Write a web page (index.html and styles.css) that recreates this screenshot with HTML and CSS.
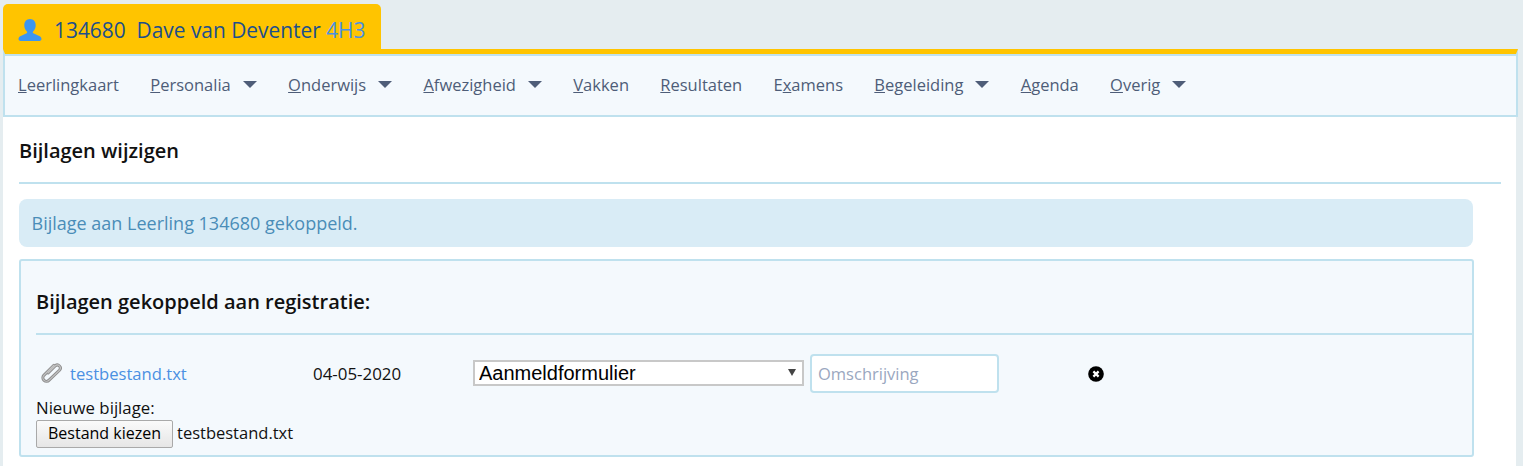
FILE: index.html
```html
<!DOCTYPE html>
<html lang="nl">
<head>
<meta charset="utf-8">
<title>Bijlagen wijzigen</title>
<link rel="stylesheet" href="styles.css">
</head>
<body>
<div class="version">Versie 7.0.1 - 2020-04-22</div>
<div class="page">
  <header class="tab">
    <svg class="user" viewBox="0 0 24 24" width="24" height="24"><path d="M12 1c3.600 0 5.700 2.800 5.700 6.300 0 2.600-1 4.900-2.600 6.200-.5.500-.4 1.400.3 1.800l5.800 2.700c1.500.7 2.300 1.800 2.300 3.100 0 1-.8 1.900-2 1.900H2.500c-1.200 0-2-.9-2-1.900 0-1.300.8-2.400 2.300-3.100l5.800-2.700c.7-.4.800-1.300.3-1.800-1.600-1.300-2.600-3.600-2.600-6.200C6.300 3.800 8.400 1 12 1z"/></svg>
    <span class="tab-text">134680&nbsp; Dave van Deventer <span class="klas">4H3</span></span>
  </header>
  <nav class="nav">
    <a class="nav-item"><u>L</u>eerlingkaart</a>
    <a class="nav-item caret"><u>P</u>ersonalia</a>
    <a class="nav-item caret"><u>O</u>nderwijs</a>
    <a class="nav-item caret"><u>A</u>fwezigheid</a>
    <a class="nav-item"><u>V</u>akken</a>
    <a class="nav-item"><u>R</u>esultaten</a>
    <a class="nav-item">E<u>x</u>amens</a>
    <a class="nav-item caret"><u>B</u>egeleiding</a>
    <a class="nav-item"><u>A</u>genda</a>
    <a class="nav-item caret"><u>O</u>verig</a>
  </nav>
  <main class="content">
    <h1 class="title">Bijlagen wijzigen</h1>
    <div class="alert">Bijlage aan Leerling 134680 gekoppeld.</div>
    <section class="card">
      <h2 class="card-title">Bijlagen gekoppeld aan registratie:</h2>
      <div class="row">
        <div class="file-cell">
          <svg class="clip" viewBox="0 0 24 24" width="23" height="23" fill="none"><path class="clip-outer" d="M8.500 13.500 16 6a3.200 3.200 0 0 1 4.500 4.500L9.500 21a3.600 3.600 0 0 1-5.500-5L14.500 5.500"/><path class="clip-inner" d="M8.500 13.500 16 6a3.200 3.200 0 0 1 4.500 4.500L9.500 21a3.600 3.600 0 0 1-5.500-5L14.500 5.500"/></svg>
          <a class="file-link">testbestand.txt</a>
        </div>
        <div class="date">04-05-2020</div>
        <div class="select-wrap"><select class="select"><option>Aanmeldformulier</option></select></div>
        <input class="input" placeholder="Omschrijving">
        <svg class="remove" viewBox="0 0 16 16" width="16" height="16"><circle cx="8" cy="8" r="7.800" fill="#000"/><path d="M5.400 5.400l5.200 5.200M10.600 5.400l-5.200 5.200" stroke="#fff" stroke-width="2.200"/></svg>
      </div>
      <div class="new-label">Nieuwe bijlage:</div>
      <div class="upload"><button class="btn">Bestand kiezen</button><span class="chosen">testbestand.txt</span></div>
    </section>
  </main>
</div>
</body>
</html>
```

FILE: styles.css
```css
html, body { margin: 0; padding: 0; height: 466px; overflow: hidden; }
body { background: #e5edf0; font-family: "Open Sans", sans-serif; position: relative; }
.version { position: absolute; top: -14px; right: 8px; font-size: 16px; line-height: 16px; color: #a8a8b0; }
.page { margin-left: 3px; width: 1515px; padding-top: 4px; }
.tab { width: 378px; height: 45px; box-sizing: border-box; background: #ffc400; border-radius: 5px 5px 0 0; display: flex; align-items: center; padding: 6px 0 0 15px; }
.user { fill: #3d96f0; flex: none; }
.tab-text { margin-left: 12px; font-size: 20.900px; color: #1c4f8c; white-space: nowrap; }
.klas { color: #4a90e2; }
.nav { border-top: 5px solid #ffc400; height: 68px; box-sizing: border-box; background: #f4f9fd; border-bottom: 2px solid #bfe1ee; border-left: 2px solid #bfe1ee; border-right: 2px solid #bfe1ee; display: flex; align-items: center; padding: 0 0 0 13px; gap: 31.300px; font-size: 16.500px; color: #4e5d78; box-shadow: inset 0 2px 0 #bfe1ee; }
.nav-item { display: flex; align-items: center; white-space: nowrap; line-height: 20px; }
.caret::after { content: ""; margin-left: 12px; border-left: 7px solid transparent; border-right: 7px solid transparent; border-top: 7px solid #4e5d78; }
.content { background: #fff; width: 1513px; height: 349px; box-sizing: border-box; padding: 0 15px 0 16px; }
.title { margin: 0; padding: 20px 0 18px; font-size: 20px; line-height: 27px; font-weight: 600; color: #111; border-bottom: 2px solid #bfe1ee; }
.alert { margin-top: 15px; width: 1454px; height: 48px; box-sizing: border-box; background: #d9ecf6; border-radius: 8px; padding: 0 12.500px; display: flex; align-items: center; font-size: 18px; color: #4a8db8; }
.card { margin-top: 12px; width: 1455px; height: 198px; box-sizing: border-box; background: #f4f9fd; border: 2px solid #bfe1ee; border-radius: 3px; padding: 0 0 0 15px; color: #111; }
.card-title { margin: 0; height: 74px; box-sizing: border-box; padding-top: 27px; font-size: 20px; line-height: 27px; font-weight: 600; color: #111; border-bottom: 2px solid #bfe1ee; }
.row { display: flex; align-items: center; height: 39px; margin-top: 19px; }
.file-cell { width: 277px; display: flex; align-items: center; }
.clip { margin: -5px 7px 0 4px; flex: none; }
.clip-outer { stroke: #8e8e8e; stroke-width: 3.200; stroke-linecap: round; }
.clip-inner { stroke: #c4c4c4; stroke-width: 1.200; stroke-linecap: round; }
.file-link { color: #4a90e2; font-size: 16.600px; }
.date { width: 160px; font-size: 16.900px; }
.select-wrap { position: relative; width: 331px; height: 26px; margin: -1px 6px 0 0; flex: none; }
.select-wrap::after { content: ""; position: absolute; right: 8px; top: 9px; border-left: 4px solid transparent; border-right: 4px solid transparent; border-top: 7px solid #444; pointer-events: none; }
.select { appearance: none; width: 100%; height: 100%; box-sizing: border-box; background: #fff; border: 2px solid #c8c8c8; border-radius: 0; font-family: "Liberation Sans", sans-serif; font-size: 20px; color: #000; padding: 0 0 2px 4px; }
.input { width: 189px; height: 39px; box-sizing: border-box; background: #fff; border: 2px solid #bfe1ee; border-radius: 4px; padding: 0 6px; font-family: "Open Sans", sans-serif; font-size: 16.500px; outline: none; }
.input::placeholder { color: #9aa7bf; }
.remove { margin-left: 89px; flex: none; }
.new-label { font-size: 16.800px; line-height: 20px; margin-top: 5px; }
.upload { display: flex; align-items: center; margin-top: 2px; }
.btn { width: 137px; height: 28px; box-sizing: border-box; padding: 0 0 2px; border: 1px solid #a9a9a9; border-radius: 2px; background: linear-gradient(#fafafa, #e6e6e6); font-family: "Open Sans", sans-serif; font-size: 16px; color: #000; }
.chosen { margin: -3px 0 0 4px; font-size: 16.500px; }
```
